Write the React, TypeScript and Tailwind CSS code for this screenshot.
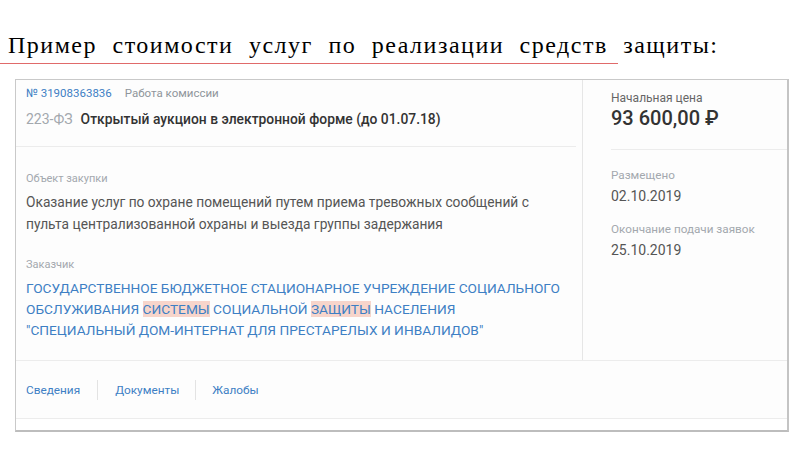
const blue = "text-[#3d7fc4]";

const Label = ({ children }: { children: React.ReactNode }) => (
  <div className="text-[11px] leading-4 text-[#a3a8ae]">{children}</div>
);

const Mark = ({ children }: { children: React.ReactNode }) => (
  <span className="bg-[#f7d5cb]">{children}</span>
);

const Info = ({ label, value }: { label: string; value: string }) => (
  <div>
    <div className="text-[11.7px] leading-4 text-[#a3a8ae]">{label}</div>
    <div className="mt-[3px] text-[14px] leading-5 text-[#555]">{value}</div>
  </div>
);

export default function App() {
  return (
    <div className="w-[800px] h-[450px] bg-white overflow-hidden">
      <div className="pt-[31px] pl-[8px]">
        <div className="font-['Liberation_Serif',serif] text-[24px] leading-[28px] text-black whitespace-nowrap tracking-[1.5px] [word-spacing:8px]">
          Пример стоимости услуг по реализации средств защиты:
        </div>
      </div>
      <div className="w-[618px] border-b border-[#e06a6a] mt-[4px]" />

      <div className="ml-[15px] mt-[15px] w-[774px] h-[353px] border border-[#c9c9c9] border-b-2 border-r-2 border-b-[#bdbdbd] border-r-[#c4c4c4] bg-[#fdfdfd] flex flex-col font-['Roboto',sans-serif]">
        <div className="flex flex-1">
          <div className="w-[566px] flex flex-col">
            <div className="mr-[6px] pt-[5px] pl-[10px] pb-[17px] border-b border-[#ececec]">
              <div className="text-[11.5px] leading-4 flex gap-[13px]">
                <span className={blue}>№ 31908363836</span>
                <span className="text-[#8f959b]">Работа комиссии</span>
              </div>
              <div className="mt-2 text-[14px] leading-5 flex gap-[8px]">
                <span className="text-[#a3a8ae]">223-ФЗ</span>
                <span className="font-medium text-[#333] text-[13.85px]">
                  Открытый аукцион в электронной форме (до 01.07.18)
                </span>
              </div>
            </div>
            <div className="pl-[10px] pt-[24px]">
              <Label>Объект закупки</Label>
              <div className="mt-[4px] text-[13.75px] leading-[22px] text-[#555]">
                Оказание услуг по охране помещений путем приема тревожных сообщений с
                <br />
                пульта централизованной охраны и выезда группы задержания
              </div>
              <div className="mt-[22px]">
                <Label>Заказчик</Label>
              </div>
              <div className={`mt-[5px] text-[13.7px] leading-[21px] ${blue}`}>
                ГОСУДАРСТВЕННОЕ БЮДЖЕТНОЕ СТАЦИОНАРНОЕ УЧРЕЖДЕНИЕ СОЦИАЛЬНОГО
                <br />
                ОБСЛУЖИВАНИЯ <Mark>СИСТЕМЫ</Mark> СОЦИАЛЬНОЙ <Mark>ЗАЩИТЫ</Mark> НАСЕЛЕНИЯ
                <br />
                "СПЕЦИАЛЬНЫЙ ДОМ-ИНТЕРНАТ ДЛЯ ПРЕСТАРЕЛЫХ И ИНВАЛИДОВ"
              </div>
            </div>
          </div>
          <div className="flex-1 border-l border-[#e6e6e6]">
            <div className="ml-[28px] pt-[10px] pb-[19px] border-b border-[#ececec]">
              <div className="text-[12px] leading-4 text-[#666]">Начальная цена</div>
              <div className="text-[20px] leading-6 font-medium text-[#333]">93 600,00 ₽</div>
            </div>
            <div className="pl-[28px] pt-[17px] flex flex-col gap-[15px]">
              <Info label="Размещено" value="02.10.2019" />
              <Info label="Окончание подачи заявок" value="25.10.2019" />
            </div>
          </div>
        </div>
        <div className="h-[58px] border-t border-[#ececec] flex items-center pl-[10px] text-[11.8px] leading-4">
          <span className={blue}>Сведения</span>
          <span className="mx-[17px] h-[20px] border-l border-[#e3e3e3]" />
          <span className={blue}>Документы</span>
          <span className="mx-[16px] h-[20px] border-l border-[#e3e3e3]" />
          <span className={blue}>Жалобы</span>
        </div>
        <div className="h-[12px] border-t border-[#ececec] bg-white" />
      </div>
    </div>
  );
}
